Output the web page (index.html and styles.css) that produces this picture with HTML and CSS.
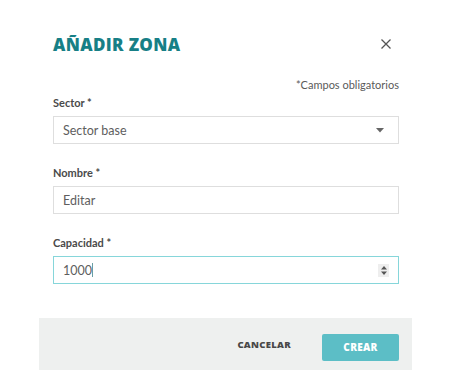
FILE: index.html
```html
<!DOCTYPE html>
<html lang="es">
<head>
<meta charset="utf-8">
<link rel="stylesheet" href="styles.css">
</head>
<body>
<div class="modal">
  <div class="body">
    <div class="header">
      <h1 class="title">AÑADIR ZONA</h1>
      <svg class="close" width="12" height="12" viewBox="0 0 12 12"><path d="M1.5 1.5L10.5 10.5M10.5 1.5L1.5 10.5" stroke="#555" stroke-width="1.3" fill="none"/></svg>
    </div>
    <div class="required">*Campos obligatorios</div>
    <div class="field">
      <label class="label">Sector *</label>
      <div class="input">
        <span>Sector base</span>
        <svg class="caret" width="8" height="5" viewBox="0 0 8 5"><path d="M0 0H8L4 4.5Z" fill="#666"/></svg>
      </div>
    </div>
    <div class="field">
      <label class="label">Nombre *</label>
      <div class="input"><span>Editar</span></div>
    </div>
    <div class="field">
      <label class="label">Capacidad *</label>
      <div class="input focus">
        <span>1000<i class="cursor"></i></span>
        <span class="spin">
          <svg width="6" height="9" viewBox="0 0 6 9"><path d="M3 0L6 3.5H0Z M0 5.5H6L3 9Z" fill="#555"/></svg>
        </span>
      </div>
    </div>
  </div>
  <div class="footer">
    <button class="btn cancel">CANCELAR</button>
    <button class="btn create">CREAR</button>
  </div>
</div>
</body>
</html>
```
FILE: styles.css
```css
html, body {
  margin: 0;
  padding: 0;
  background: #fff;
}
body {
  font-family: "Lato", "Noto Sans", sans-serif;
  color: #5a5a5a;
}
.modal {
  width: 373px;
  margin-left: 39px;
}
.body {
  padding: 33px 13px 34px 14px;
}
.header {
  display: flex;
  justify-content: space-between;
  align-items: center;
  height: 22px;
}
.title {
  margin: 0;
  font-family: "Open Sans", sans-serif;
  font-weight: 800;
  font-size: 17px;
  color: #177f86;
  letter-spacing: 0.35px;
}
.close {
  margin-right: 7px;
}
.required {
  margin-top: 23px;
  text-align: right;
  font-size: 11px;
  color: #5a5a5a;
  line-height: 14px;
}
.field {
  display: flex;
  flex-direction: column;
}
.field + .field {
  margin-top: 22px;
}
.label {
  margin-top: 4px;
  font-size: 11px;
  font-weight: 700;
  color: #4a4a4a;
  line-height: 14px;
  margin-bottom: 6px;
}
.field + .field .label {
  margin-top: 0;
}
.input {
  height: 26px;
  border: 1px solid #dedede;
  display: flex;
  align-items: center;
  justify-content: space-between;
  padding: 0 14px 0 9px;
  font-size: 12.5px;
  color: #5e5e5e;
}
.input.focus {
  border-color: #86d6da;
  padding-right: 9px;
}
.cursor {
  display: inline-block;
  width: 1px;
  height: 14px;
  background: #6a9ea3;
  vertical-align: -2px;
}
.spin {
  width: 11px;
  height: 13px;
  background: #eee;
  display: flex;
  align-items: center;
  justify-content: center;
}
.footer {
  background: #eef0ef;
  height: 52px;
  display: flex;
  justify-content: flex-end;
  align-items: center;
  padding-right: 13px;
  gap: 31px;
}
.btn {
  font-family: "Open Sans", sans-serif;
  font-weight: 800;
  font-size: 9.5px;
  letter-spacing: 0.3px;
  border: none;
  cursor: pointer;
  margin: 0;
}
.cancel {
  background: none;
  color: #484848;
  padding: 0;
}
.create {
  background: #5cbec6;
  color: #fff;
  width: 77px;
  height: 27px;
  border-radius: 2px;
  margin-top: 6px;
  font-size: 10px;
}
```
